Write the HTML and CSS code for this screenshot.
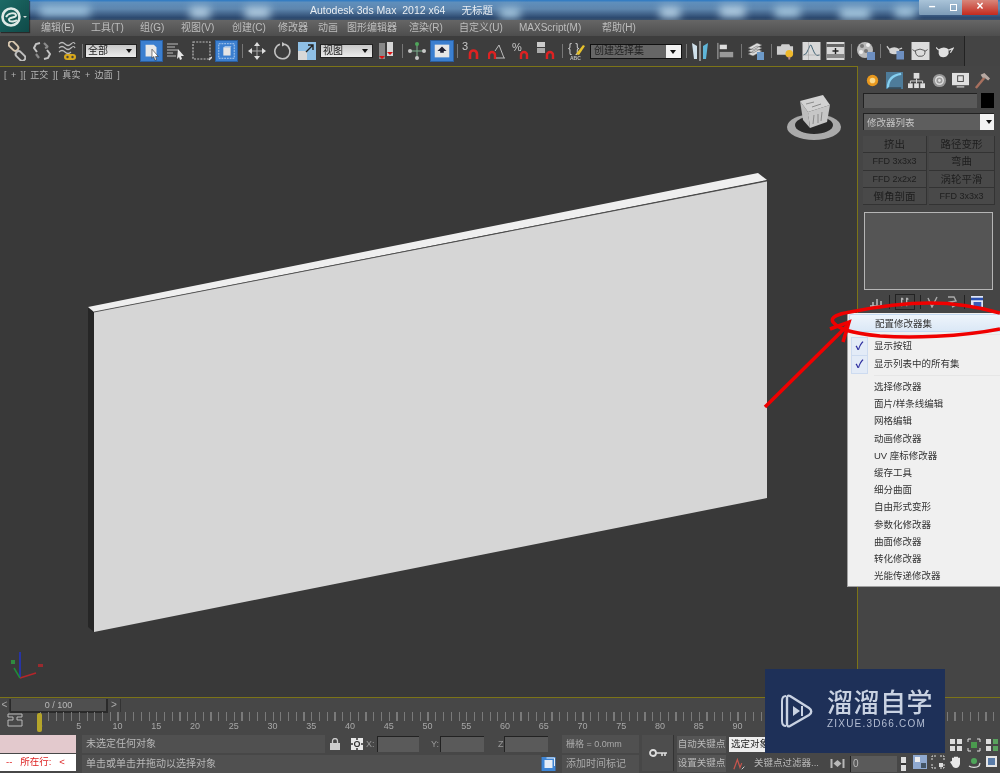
FILE: index.html
```html
<!DOCTYPE html>
<html lang="zh">
<head>
<meta charset="utf-8">
<title>Autodesk 3ds Max 2012 x64</title>
<link rel="stylesheet" href="styles.css">
</head>
<body>
<div class="app">
  <header class="titlebar">
    <div class="patches"></div>
    <div class="title"><span>Autodesk 3ds Max&nbsp; 2012 x64</span><span>无标题</span></div>
    <div class="winbtns">
      <span class="wb">&#8211;</span><span class="wb max"><b></b></span><span class="wb close">&#215;</span>
    </div>
  </header>
  <a class="applogo">
    <svg width="29" height="32" viewBox="0 0 29 32"><circle cx="11" cy="17" r="8.5" fill="none" stroke="#dfe9e6" stroke-width="2.6"/><path d="M6 17c2-4 9-5 10-2s-8 2-7 5 7 1 8 0" fill="none" stroke="#dfe9e6" stroke-width="2"/><path d="M23 16l4 0-2 2z" fill="#cfd8d6"/></svg>
  </a>
  <nav class="menubar">
    <span>编辑(E)</span><span>工具(T)</span><span>组(G)</span><span>视图(V)</span><span>创建(C)</span><span>修改器</span><span>动画</span><span>图形编辑器</span><span>渲染(R)</span><span>自定义(U)</span><span>MAXScript(M)</span><span>帮助(H)</span>
  </nav>
  <div class="toolrow">
    <div class="toolbar">
      <svg class="ic" viewBox="0 0 18 20"><rect x="0" y="2" width="11" height="6" rx="3" transform="rotate(45 5.500 5)" fill="none" stroke="#d6c6ae" stroke-width="2"/><rect x="7" y="12" width="11" height="6" rx="3" transform="rotate(45 12.500 15)" fill="none" stroke="#bfbfbf" stroke-width="2"/></svg>
      <svg class="ic" viewBox="0 0 18 20"><path d="M7 2L3 3 1 7l3 4M11 18l4-1 2-4-3-4" fill="none" stroke="#c4c4c4" stroke-width="2"/><path d="M11 2l4 4M12 7l3-1M3 13l3 4" stroke="#8a8a8a" stroke-width="2.200"/></svg>
      <svg class="ic" viewBox="0 0 18 20"><path d="M1 3q3-3 6 0t6 0 4 0M1 7q3-3 6 0t6 0 4 0M1 11q3-3 6 0t6 0" fill="none" stroke="#bbb" stroke-width="1.200"/><rect x="6" y="13" width="12" height="6" rx="3" fill="#d8a81c"/><circle cx="9.500" cy="16" r="1.200" fill="#444"/><circle cx="14.500" cy="16" r="1.200" fill="#444"/></svg>
      <i class="sep"></i>
      <div class="combo light"><span>全部</span><b></b></div>
      <div class="tbtn on"><svg viewBox="0 0 23 22"><path d="M5 4h9l3 3v10H5z" fill="#e8e8e8"/><path d="M12 9l7 8-3 0 1 4-2 0-1-4-2 2z" fill="#fff" stroke="#333" stroke-width=".7"/></svg></div>
      <svg class="ic" viewBox="0 0 18 18"><path d="M0 2h11M0 5h8M0 8h11M0 11h6M0 14h9" stroke="#bbb" stroke-width="1.200"/><path d="M11 7l6 7-3 0 1 3-2 1-1-3-2 2z" fill="#e6e6e6"/></svg>
      <svg class="ic rect" viewBox="0 0 20 20"><rect x="1" y="1" width="17" height="17" fill="none" stroke="#bdbdbd" stroke-dasharray="2 1.200" stroke-width="1.200"/><path d="M17 19l3-3" stroke="#ddd" stroke-width="1.400"/></svg>
      <div class="tbtn on"><svg viewBox="0 0 23 22"><rect x="3" y="3" width="17" height="16" fill="none" stroke="#bcd5f2" stroke-dasharray="2 1"/><path d="M8 7h8v9H8z" fill="#e4e4e4"/><path d="M8 7l2-1h7l-1 1z" fill="#fff"/></svg></div>
      <i class="sep"></i>
      <svg class="ic" viewBox="0 0 18 18"><path d="M9 3v12M3 9h12" stroke="#aaa" stroke-width="1"/><path d="M9 0l3 4H6zM9 18l3-4H6zM0 9l4-3v6zM18 9l-4-3v6z" fill="#dedede"/></svg>
      <svg class="ic" viewBox="0 0 18 18"><path d="M7 2.200A7.500 7.500 0 1 0 12 2.300" fill="none" stroke="#c2c2c2" stroke-width="1.600"/><path d="M9 0l4 2.500-4 2z" fill="#c2c2c2"/></svg>
      <svg class="ic" viewBox="0 0 18 18"><rect width="18" height="18" fill="#8fc0e6"/><rect y="9" width="9" height="9" fill="#d8d8d8"/><path d="M8 10l7-7M10 3h5v5" stroke="#222" stroke-width="1.400" fill="none"/></svg>
      <div class="combo light wide"><span>视图</span><b></b></div>
      <svg class="ic" viewBox="0 0 18 20"><path d="M1 2h6v16H1z" fill="#888"/><path d="M9 1h6v14H9z" fill="#d6d6d6"/><path d="M4 18l-3-3h6zM12 14l-3-3h6z" fill="#d11"/></svg>
      <i class="sep"></i>
      <svg class="ic" viewBox="0 0 18 18"><path d="M9 1v16M1 9h16" stroke="#7fb08f" stroke-width="1"/><circle cx="9" cy="2" r="2" fill="#4fa65a"/><circle cx="2" cy="9" r="2" fill="#c8c8c8"/><circle cx="16" cy="9" r="2" fill="#c8c8c8"/><circle cx="9" cy="16" r="2" fill="#c8c8c8"/></svg>
      <div class="tbtn on wide2"><svg viewBox="0 0 24 22"><rect x="4" y="4" width="16" height="14" fill="#e6e6e6"/><path d="M12 6l5 5h-3v2h-4v-2H7z" fill="#223"/></svg></div>
      <i class="sep"></i>
      <svg class="ic" viewBox="0 0 18 20"><text x="0" y="9" class="svgnum">3</text><path d="M8 18v-5a3 3 0 0 1 7 0v5" fill="none" stroke="#d22" stroke-width="2.600"/></svg>
      <svg class="ic" viewBox="0 0 18 20"><path d="M1 18v-4a3 3 0 0 1 6 0v4" fill="none" stroke="#d22" stroke-width="2.400"/><path d="M8 17h9M11 4l5 13M11 4l-4 6" fill="none" stroke="#bbb"/></svg>
      <svg class="ic" viewBox="0 0 18 20"><text x="0" y="10" class="svgnum">%</text><path d="M9 18v-4a3 3 0 0 1 6 0v4" fill="none" stroke="#d22" stroke-width="2.400"/></svg>
      <svg class="ic" viewBox="0 0 18 20"><rect x="0" y="1" width="8" height="5" fill="#ccc"/><rect x="0" y="7" width="8" height="5" fill="#aaa"/><path d="M10 18v-4a3 3 0 0 1 6 0v4" fill="none" stroke="#d22" stroke-width="2.400"/></svg>
      <i class="sep"></i>
      <svg class="ic" viewBox="0 0 18 20"><text x="0" y="11" class="svgbrace">{ }</text><path d="M8 13l7-9 2 1-6 9z" fill="#e6c12c"/><text x="2" y="19" class="svgabc">ABC</text></svg>
      <div class="combo sets"><span>创建选择集</span><b></b></div>
      <i class="sep"></i>
      <svg class="ic" viewBox="0 0 18 20"><path d="M1 2l5 3v13H3z" fill="#cfe0ea"/><path d="M9 0v20" stroke="#ddd"/><path d="M17 2l-5 3v13h3z" fill="#5fb5d8"/></svg>
      <svg class="ic" viewBox="0 0 20 20"><path d="M1 1v18" stroke="#bbb"/><rect x="3" y="3" width="8" height="5" fill="#ddd"/><rect x="3" y="11" width="15" height="6" fill="#999"/></svg>
      <i class="sep"></i>
      <svg class="ic" viewBox="0 0 18 20"><path d="M1 7l9-5 5 2-9 5zM1 10l9-5 5 2-9 5zM1 13l9-5 5 2-9 5z" fill="#ddd" stroke="#555" stroke-width=".5"/><rect x="10" y="11" width="7" height="8" fill="#6d9ac8"/></svg>
      <i class="sep"></i>
      <svg class="ic" viewBox="0 0 19 20"><path d="M1 5h4l1-2h8l1 2h3v9H1z" fill="#cfcfcf"/><circle cx="14" cy="13" r="4" fill="#f0b92a"/><rect x="13" y="16" width="2" height="3" fill="#b88"/></svg>
      <svg class="ic big" viewBox="0 0 18 18"><rect width="18" height="18" fill="#d8d8d8"/><path d="M1 13q3 0 5-6t3-3 3 7 5 2" fill="none" stroke="#467" stroke-width="1"/><path d="M0 13h18M6 0v18" stroke="#999" stroke-width=".5"/></svg>
      <svg class="ic big" viewBox="0 0 18 18"><rect width="18" height="18" fill="#d8d8d8"/><rect y="2" width="18" height="3" fill="#666"/><rect y="12" width="18" height="4" fill="#888"/><path d="M9 6v6M6 9h6" stroke="#222" stroke-width="1.400"/></svg>
      <i class="sep"></i>
      <svg class="ic" viewBox="0 0 18 20"><circle cx="8" cy="9" r="8" fill="#bbb"/><circle cx="5" cy="5" r="2" fill="#777"/><circle cx="11" cy="4" r="2" fill="#eee"/><circle cx="4" cy="11" r="2" fill="#eee"/><circle cx="9" cy="10" r="2" fill="#777"/><rect x="10" y="11" width="8" height="8" fill="#6d8fc0"/></svg>
      <i class="sep"></i>
      <svg class="ic" viewBox="0 0 19 20"><path d="M3 8q6-4 11 0v4q-5 3-10 0z" fill="#d5d5d5"/><path d="M1 5l3 4M14 8l3-1" stroke="#ccc" stroke-width="1.400"/><rect x="11" y="10" width="8" height="9" fill="#6d8fc0"/></svg>
      <svg class="ic big" viewBox="0 0 19 19"><rect width="19" height="19" fill="#dcdcdc"/><path d="M4 9q5-3 10 0 1 5-3 6H7q-3-1-3-6zM14 10l3-2M4 10L1 8" fill="none" stroke="#555"/></svg>
      <svg class="ic" viewBox="0 0 20 18"><path d="M3 7q6-4 11 0v5q-2 4-6 4t-5-4z" fill="#e0e0e0"/><path d="M14 8l5-2-3 5M3 8L0 5" stroke="#ddd" stroke-width="1.400" fill="none"/></svg>
    </div>
  </div>
  <main class="workspace">
    <section class="viewport">
      <div class="vplabel">[ + ][ 正交 ][ 真实 + 边面 ]</div>
    </section>
    <aside class="panel">
      <div class="tabs">
        <svg class="tab" viewBox="0 0 18 18"><circle cx="9" cy="9" r="6" fill="#e8981e"/><circle cx="9" cy="9" r="3" fill="#fbd98a"/></svg>
        <svg class="tab" viewBox="0 0 18 18"><rect width="18" height="18" fill="#4e7c9a"/><path d="M2 17Q2 4 16 2" fill="none" stroke="#86d0f0" stroke-width="2.400"/><path d="M2 17h14" stroke="#222"/></svg>
        <svg class="tab" viewBox="0 0 18 18"><rect x="6" y="1" width="6" height="6" fill="#ddd"/><rect y="12" width="5" height="5" fill="#ddd"/><rect x="6.500" y="12" width="5" height="5" fill="#ddd"/><rect x="13" y="12" width="5" height="5" fill="#ddd"/><path d="M9 7v5M2.500 12V9.500h13V12" stroke="#ddd" fill="none"/></svg>
        <svg class="tab" viewBox="0 0 18 18"><circle cx="10" cy="9" r="7" fill="#999"/><circle cx="10" cy="9" r="4" fill="none" stroke="#ddd" stroke-width="1.500"/><circle cx="10" cy="9" r="1.500" fill="#ddd"/></svg>
        <svg class="tab" viewBox="0 0 18 18"><rect y="1" width="18" height="13" fill="#e0e0e0"/><rect x="6" y="4" width="6" height="6" fill="none" stroke="#444"/><rect x="5" y="15" width="8" height="1.500" fill="#bbb"/></svg>
        <svg class="tab" viewBox="0 0 18 18"><path d="M2 17L11 6" stroke="#a8705e" stroke-width="2.600"/><path d="M7 3l4-2 6 6-2 2-4-3-2 0z" fill="#b7a9a2"/></svg>
      </div>
      <div class="namerow"><div class="namefield"></div><div class="swatch"></div></div>
      <div class="modlist"><span>修改器列表</span><b></b></div>
      <div class="modbtns">
        <span class="mb">挤出</span><span class="mb">路径变形</span>
        <span class="mb sm">FFD 3x3x3</span><span class="mb">弯曲</span>
        <span class="mb sm">FFD 2x2x2</span><span class="mb">涡轮平滑</span>
        <span class="mb">倒角剖面</span><span class="mb sm">FFD 3x3x3</span>
      </div>
      <div class="stack"></div>
      <div class="stackbar">
        <svg class="sb" viewBox="0 0 14 12"><path d="M0 10h14M3 6v4M7 3v7M11 5v5" stroke="#bbb" stroke-width="1.500"/></svg>
        <i class="vs"></i>
        <span class="sbbox"><svg viewBox="0 0 14 12"><path d="M3 1v10M9 1v10M3 1l2 2M9 1l2 2" stroke="#bbb" stroke-width="1.500"/></svg></span>
        <i class="vs"></i>
        <svg class="sb" viewBox="0 0 14 12"><path d="M2 2l4 9 5-10" stroke="#aaa" stroke-width="1.400" fill="none"/></svg>
        <svg class="sb" viewBox="0 0 14 12"><path d="M3 1h6l2 4-6 1 6 3-4 2" stroke="#aaa" stroke-width="1.400" fill="none"/></svg>
        <i class="vs"></i>
        <svg class="sb" viewBox="0 0 14 14"><rect width="14" height="14" fill="#dfe6f5"/><rect y="2" width="14" height="3" fill="#2a4fb0"/><rect x="3" y="7" width="9" height="6" fill="#3a5ab8"/></svg>
      </div>
    </aside>
  </main>
  <div class="timeline">
    <div class="slider">
      <span class="arrowbtn">&lt;</span><span class="frame">0 / 100</span><span class="arrowbtn">&gt;</span>
    </div>
    <div class="ruler">
      <svg class="curveic" viewBox="0 0 16 14"><path d="M1 1h14v3H10v3h5v6H1V7h5V4H1z" fill="none" stroke="#bbb"/></svg>
      <div class="scale">
        <div class="ticks"></div>
        <div class="nums"><span>0</span><span>5</span><span>10</span><span>15</span><span>20</span><span>25</span><span>30</span><span>35</span><span>40</span><span>45</span><span>50</span><span>55</span><span>60</span><span>65</span><span>70</span><span>75</span><span>80</span><span>85</span><span>90</span></div>
        <b class="handle"></b>
      </div>
    </div>
  </div>
  <footer class="status">
    <div class="listener"><div class="pink"></div><div class="line">-- &nbsp;&nbsp;所在行: &nbsp;&nbsp;&lt;</div></div>
    <div class="msgs">
      <div class="msg1">
        <span class="msgtxt w1">未选定任何对象</span>
        <svg class="lock" viewBox="0 0 10 12"><rect y="5" width="10" height="7" fill="#ccc"/><path d="M2.500 5V3a2.500 2.500 0 0 1 5 0v2" fill="none" stroke="#ccc" stroke-width="1.300"/></svg>
        <svg class="abs" viewBox="0 0 12 12"><rect width="12" height="12" fill="#e8e8e8"/><circle cx="6" cy="6" r="2.500" fill="none" stroke="#333" stroke-width="1.200"/><path d="M6 0v2M6 10v2M0 6h2M10 6h2" stroke="#333" stroke-width="1.500"/></svg>
        <span class="axis">X:</span><span class="coord cx"></span>
        <span class="axis ay">Y:</span><span class="coord cy"></span>
        <span class="axis az">Z:</span><span class="coord cz"></span>
      </div>
      <div class="msg2">
        <span class="msgtxt w2">单击或单击并拖动以选择对象</span>
        <svg class="tagic" viewBox="0 0 14 14"><rect width="14" height="14" fill="#3f86d6"/><rect x="3" y="3" width="8" height="8" fill="#e6eef8"/><path d="M5 1h8v8" fill="none" stroke="#e6eef8"/></svg>
      </div>
    </div>
    <div class="gridcol">
      <div class="gridbox">栅格 = 0.0mm</div>
      <div class="gridbox tag">添加时间标记</div>
    </div>
    <div class="keybox"><svg viewBox="0 0 18 8"><circle cx="4" cy="4" r="3" fill="none" stroke="#ddd" stroke-width="1.800"/><path d="M7 4h11M13 4v3M16 4v3" stroke="#ddd" stroke-width="1.600"/></svg></div>
    <div class="keycol">
      <div class="keyrow"><span class="keybtn">自动关键点</span><span class="keysel">选定对象</span></div>
      <div class="keyrow"><span class="keybtn">设置关键点</span>
        <svg class="wave" viewBox="0 0 16 14"><path d="M1 13L5 2l3 9 2-5" fill="none" stroke="#c8564e" stroke-width="1.400"/><path d="M10 13l3-3" stroke="#ddd"/></svg>
        <span class="filter">关键点过滤器...</span>
        <svg class="prev" viewBox="0 0 14 9"><path d="M0 0h2v9H0zM14 0h-2v9h2zM3 4.500L7 1v7zM11 4.500L7 1v7z" fill="#b8b8b8"/></svg>
        <span class="framefield">0</span><span class="spin"></span>
      </div>
    </div>
    <div class="navs">
      <svg class="nav first" viewBox="0 0 14 14"><path d="M1 1h5v5H1zM8 1h5v5H8zM1 8h5v5H1zM8 8h5v5H8z" fill="#ddd"/></svg>
      <svg class="nav" viewBox="0 0 14 14"><rect x="4" y="4" width="6" height="6" fill="#4a9a4e"/><path d="M1 4V1h3M10 1h3v3M13 10v3h-3M4 13H1v-3" fill="none" stroke="#ddd"/></svg>
      <svg class="nav" viewBox="0 0 14 14"><path d="M1 1h5v5H1zM1 8h5v5H1z" fill="#ddd"/><path d="M8 1h5v5H8zM8 8h5v5H8z" fill="#5aa25e"/></svg>
      <svg class="nav" viewBox="0 0 14 14"><rect x="0" y="0" width="14" height="14" fill="#8fa9d0"/><rect x="2" y="2" width="5" height="5" fill="#eee"/><rect x="8" y="8" width="5" height="5" fill="#456"/></svg>
      <svg class="nav" viewBox="0 0 14 14"><path d="M1 5V1h4M9 1h4v4M13 9v4H9M5 13H1V9" fill="none" stroke="#ddd" stroke-dasharray="2 1"/><rect x="8" y="8" width="4" height="4" fill="#ddd"/></svg>
      <svg class="nav" viewBox="0 0 14 14"><path d="M3 6V3q1-1 2 0V2q1-1 2 0v0q1-1 2 0v1q1-1 2 0v6q-1 4-4 4T3 10L1 7q1-1 2-1z" fill="#e8e8e8"/></svg>
      <svg class="nav" viewBox="0 0 14 14"><circle cx="7" cy="6" r="3" fill="#4fa65a"/><path d="M2 11a6 3 0 0 0 10 0M12 11l1-3" fill="none" stroke="#ddd" stroke-width="1.300"/></svg>
      <svg class="nav" viewBox="0 0 14 14"><rect x="1" y="1" width="11" height="11" fill="#e6e6e6"/><rect x="3" y="3" width="7" height="7" fill="#5a7ca8"/></svg>
    </div>
  </footer>

  <svg class="scene" width="1000" height="773" viewBox="0 0 1000 773">
    <polygon points="88,307 94,312 94,632 88,627" fill="#262626"/>
    <polygon points="88,307 758,173 767,180 94,312" fill="#efefef"/>
    <polygon points="94,312 767,181 767,498 94,632" fill="#d6d6d6"/>
    <path d="M94,312 L767,181" stroke="#444" stroke-width=".8"/>
    <g>
      <ellipse cx="814" cy="127" rx="27" ry="13" fill="#aaa"/>
      <ellipse cx="814" cy="125" rx="19" ry="9" fill="#2a2a2a"/>
      <polygon points="800,101 808,112 810,128 803,120" fill="#bdbdbd"/>
      <polygon points="808,112 830,105 827,122 810,128" fill="#c6c6c6"/>
      <polygon points="800,101 823,95 830,105 808,112" fill="#d2d2d2"/>
      <path d="M814 115l-1 9M818 114l0 9M822 112l-1 9M806 104l8-2M812 107l9-3" stroke="#8a8a8a"/>
    </g>
    <g fill="none">
      <path d="M20 678V652" stroke="#2233c8" stroke-width="1.500"/>
      <path d="M20 678l16-5" stroke="#b5252a" stroke-width="1.500"/>
      <path d="M20 678l-6-10" stroke="#1f8a3a" stroke-width="1.500"/>
      <rect x="11" y="660" width="4" height="4" fill="#2f8a3f"/>
      <rect x="38" y="664" width="5" height="3" fill="#9a2a2e"/>
    </g>
  </svg>

  <div class="ctxmenu">
    <div class="item hot">配置修改器集</div>
    <i class="rule"></i>
    <div class="item chk">显示按钮</div>
    <div class="item chk">显示列表中的所有集</div>
    <i class="rule"></i>
    <div class="item">选择修改器</div>
    <div class="item">面片/样条线编辑</div>
    <div class="item">网格编辑</div>
    <div class="item">动画修改器</div>
    <div class="item">UV 座标修改器</div>
    <div class="item">缓存工具</div>
    <div class="item">细分曲面</div>
    <div class="item">自由形式变形</div>
    <div class="item">参数化修改器</div>
    <div class="item">曲面修改器</div>
    <div class="item">转化修改器</div>
    <div class="item">光能传递修改器</div>
  </div>

  <svg class="annot" width="1000" height="773" viewBox="0 0 1000 773">
    <path d="M765 407L847 326" stroke="#f00000" stroke-width="3.500" fill="none"/>
    <path d="M830 329L849 322 843 342" stroke="#f00000" stroke-width="3.500" fill="none"/>
    <path d="M1000 313C975 306 950 303 930 303 900 303 870 308 850 312 838 314 830 317 833 322 838 329 850 333 880 336 910 338 960 337 1000 329" stroke="#f00000" stroke-width="3.500" fill="none"/>
  </svg>

  <div class="watermark">
    <svg class="wmlogo" viewBox="0 0 34 36"><path d="M6 3c-3 0-4 2-4 5v20c0 3 1 5 4 5" fill="none" stroke="#c9d2e2" stroke-width="2"/><path d="M10 3l19 12c3 2 3 5 0 7L10 33c-2 1-3 0-3-2V5c0-2 1-3 3-2z" fill="none" stroke="#c9d2e2" stroke-width="2.400"/><path d="M13 13l7 5-7 5z" fill="#c9d2e2"/><path d="M22 13v10" stroke="#c9d2e2" stroke-width="2"/></svg>
    <div class="wmtext"><div class="wmcn">溜溜自学</div><div class="wmen">ZIXUE.3D66.COM</div></div>
  </div>
</div>
</body>
</html>
```
FILE: styles.css
```css
* { box-sizing: border-box; }
html, body { margin: 0; padding: 0; }
body { width: 1000px; height: 773px; overflow: hidden; background: #3a3a3a; }
.app {
  position: relative; width: 1000px; height: 773px; overflow: hidden;
  display: flex; flex-direction: column;
  font-family: "Liberation Sans", "Noto Sans CJK SC", sans-serif;
  font-size: 10px; color: #b9b9b9; background: #444;
  filter: blur(.5px);
}

/* title bar */
.titlebar {
  height: 20px; flex: none; position: relative; display: flex; justify-content: flex-end;
  background: linear-gradient(#2a78c4 0, #5f8fbc 12%, #5e86ae 45%, #2d4a70 88%, #39506a 100%);
  overflow: hidden;
}
.patches {
  position: absolute; inset: 0; filter: blur(4px);
  background-repeat: no-repeat;
  background-image:
    linear-gradient(#9fc4df, #9fc4df), linear-gradient(#b5d0e4, #b5d0e4), linear-gradient(#b5d0e4, #b5d0e4),
    linear-gradient(#a9cbe2, #a9cbe2), linear-gradient(#b5d0e4, #b5d0e4), linear-gradient(#b5d0e4, #b5d0e4),
    linear-gradient(#a9cbe2, #a9cbe2), linear-gradient(#a9cbe2, #a9cbe2), linear-gradient(#a9cbe2, #a9cbe2);
  background-size: 50px 10px, 20px 11px, 25px 11px, 20px 10px, 20px 11px, 25px 11px, 25px 10px, 30px 11px, 20px 10px;
  background-position: 40px 6px, 190px 7px, 245px 7px, 500px 8px, 660px 7px, 720px 6px, 775px 7px, 840px 8px, 895px 7px;
}
.title {
  position: absolute; left: 310px; top: 3px; display: flex; gap: 16px;
  font-size: 10.500px; line-height: 14px; color: #e9eef3; white-space: pre;
}
.winbtns { position: relative; display: flex; height: 16px; margin: 0 2px 0 0; border-radius: 0 0 3px 3px; overflow: hidden; }
.wb { width: 26px; height: 15px; line-height: 13px; text-align: center; color: #fff; font-weight: bold; font-size: 12px; background: linear-gradient(#a9c3d8, #7d9cb8); }
.max { width: 17px; display: flex; align-items: center; justify-content: center; }
.max b { width: 7px; height: 7px; border: 1.500px solid #fff; }
.close { width: 36px; background: linear-gradient(#d8867a, #c42a1e); }
.applogo {
  position: absolute; left: 0; top: 0; width: 29px; height: 32px;
  background: linear-gradient(135deg, #1d6a66, #0f4a48);
  box-shadow: 1px 1px 1px rgba(0,0,0,.5);
}
.applogo svg { display: block; }

/* menu */
.menubar {
  height: 16px; flex: none; padding-left: 41px;
  display: grid; grid-template-columns: 50px 49px 41px 51px 46px 40px 29px 62px 50px 60px 83px auto;
  align-items: center; justify-content: start;
  background: linear-gradient(#666, #4e4e4e);
  font-size: 10px; line-height: 16px; color: #bdbdbd; white-space: nowrap;
}

/* toolbar */
.toolrow { height: 30px; flex: none; background: #444; }
.toolbar {
  width: 965px; height: 30px; padding-left: 8px; background: #3d3d3d;
  border-right: 1px solid #222;
  display: grid; align-items: center; justify-content: start;
  grid-template-columns: 25px 25px 24px 3px 55px 27px 25px 23px 27px 6px 25px 25px 22px 58px 24px 6px 22px 27px 5px 26px 24px 25px 25px 6px 22px 96px 5px 26px 24px 6px 24px 5px 26px 24px 25px 6px 23px 6px 25px 25px 25px;
}
.ic { width: 18px; height: 20px; display: block; }
.rect { width: 20px; height: 20px; }
.big { width: 19px; height: 18px; }
.sep { display: block; width: 1px; height: 14px; background: #777; }
.tbtn { width: 23px; height: 22px; background: #3b7fd0; border: 1px solid #2a5e9e; }
.wide2 { width: 24px; }
.tbtn svg { display: block; width: 100%; height: 100%; }
.combo {
  width: 52px; height: 14px; display: flex; align-items: center; justify-content: space-between;
  padding: 0 4px 0 2px; font-size: 10px; color: #222; line-height: 14px;
}
.combo.light { background: linear-gradient(#c8c8c8, #ececec); border: 1px solid #222; }
.combo.wide { width: 53px; }
.combo b, .modlist b { width: 0; height: 0; border: 3px solid transparent; border-top: 4px solid #111; border-bottom: 0; }
.combo.sets { width: 92px; height: 15px; padding: 0 0 0 3px; background: #666; border: 1px solid #111; color: #222; }
.combo.sets b { width: 15px; height: 13px; background: #f2f2f2; border: 0; position: relative; }
.combo.sets b::after { content: ""; position: absolute; left: 4px; top: 5px; border: 3px solid transparent; border-top: 4px solid #111; border-bottom: 0; }
.svgnum { font: 11px "Liberation Sans", sans-serif; fill: #c8c8c8; }
.svgbrace { font: 12px "Liberation Sans", sans-serif; fill: #c8c8c8; }
.svgabc { font: bold 5px "Liberation Sans", sans-serif; fill: #bbb; }

/* workspace */
.workspace { height: 631px; flex: none; display: flex; }
.viewport { width: 858px; flex: none; background: #393939; border-right: 1px solid #7c7418; box-shadow: inset 0 1px 0 #7c7418; padding: 4px 0 0 4px; }
.vplabel { font-size: 9px; line-height: 11px; color: #b5b5b5; letter-spacing: .2px; word-spacing: 1.500px; }
.panel { flex: 1; padding: 5px 5px 0 5px; background: #454545; display: flex; flex-direction: column; }
.tabs { display: flex; height: 19px; gap: 5px; padding-left: 1px; align-items: center; }
.tab { width: 17px; height: 17px; flex: none; }
.namerow { display: flex; gap: 4px; margin-top: 3px; height: 15px; }
.namefield { width: 114px; background: #5a5a5a; border-top: 1px solid #222; border-left: 1px solid #222; }
.swatch { width: 13px; background: #000; }
.modlist { width: 131px; height: 17px; margin-top: 5px; background: #5e5e5e; border-top: 1px solid #222; border-left: 1px solid #222; display: flex; align-items: center; padding-left: 3px; color: #c6c6c6; font-size: 9.500px; position: relative; }
.modlist span { flex: 1; }
.modlist b { box-sizing: content-box; margin-right: 2px; position: relative; z-index: 1; }
.modlist::after { content: ""; position: absolute; right: 0; top: 0; width: 14px; height: 16px; background: #f2f2f2; z-index: 0; }
.modbtns { display: grid; grid-template-columns: 64px 66px; column-gap: 2px; margin-top: 6px; width: 132px; }
.mb { height: 17.300px; line-height: 16px; text-align: center; background: #494949; border-right: 1px solid #333; border-bottom: 1px solid #333; color: #1e1e1e; font-size: 10.500px; white-space: nowrap; }
.mb.sm { font-size: 9px; }
.stack { width: 129px; height: 78px; margin: 7px 0 0 1px; border: 1px solid #b5b5b5; background: #555; }
.stackbar { display: flex; align-items: center; gap: 5px; margin: 4px 0 0 7px; height: 16px; }
.sb { width: 14px; height: 12px; flex: none; }
.sbbox { width: 20px; height: 16px; border: 1px solid #222; padding: 2px 3px; flex: none; }
.sbbox svg { display: block; width: 100%; height: 100%; }
.vs { width: 1px; height: 14px; background: #222; flex: none; }

/* timeline */
.timeline { height: 36px; flex: none; background: #474747; box-shadow: inset 0 1px 0 #7c7418; }
.slider { height: 15px; padding-top: 2px; display: flex; }
.arrowbtn { width: 10px; height: 13px; line-height: 12px; text-align: center; color: #aaa; border-right: 1px solid #333; }
.arrowbtn:last-child { width: 13px; text-align: center; border-right: 1px solid #333; }
.frame { width: 98px; height: 14px; line-height: 12px; text-align: center; background: #4f4f4f; border: 1px solid #2a2a2a; border-width: 0 2px 2px 1px; color: #b8b8b8; font-size: 9px; }
.ruler { height: 21px; display: flex; }
.curveic { width: 16px; height: 14px; margin: 1px 0 0 7px; flex: none; }
.scale { position: relative; margin-left: 17px; flex: 1; }
.ticks { height: 9px; background: repeating-linear-gradient(90deg, #7a7a7a 0, #7a7a7a 1px, transparent 1px, transparent 7.750px); }
.nums { display: grid; grid-template-columns: repeat(21, 38.750px); margin-left: -6px; font-size: 9px; line-height: 11px; color: #a8a8a8; }
.nums span { text-align: center; width: 12px; }
.handle { position: absolute; left: -3px; top: 1px; width: 5px; height: 19px; background: #b5a52a; border-radius: 2px; }

/* status */
.status { height: 40px; flex: 1; display: flex; background: #474747; padding-top: 2px; }
.listener { width: 76px; flex: none; }
.pink { height: 18px; background: #e3c9cd; }
.line { height: 17px; margin-top: 1px; background: #fff; color: #d22; font-size: 9.500px; line-height: 16px; padding-left: 6px; white-space: pre; }
.msgs { width: 474px; margin-left: 6px; flex: none; }
.msg1, .msg2 { display: flex; align-items: center; height: 18px; }
.msg2 { margin-top: 2px; }
.msgtxt { height: 100%; background: #505050; padding-left: 4px; line-height: 18px; font-size: 10px; color: #b8b8b8; }
.w1 { width: 243px; }
.w2 { width: 460px; }
.lock { width: 10px; height: 12px; margin-left: 5px; flex: none; }
.abs { width: 12px; height: 12px; margin-left: 11px; flex: none; }
.axis { margin-left: 3px; width: 11px; color: #999; font-size: 9px; flex: none; }
.ay { margin-left: 12px; width: 9px; }
.az { margin-left: 14px; width: 6px; }
.coord { width: 42px; height: 16px; background: #5a5a5a; border-top: 1px solid #222; border-left: 1px solid #222; flex: none; }
.cy { width: 44px; }
.cz { width: 44px; }
.tagic { width: 15px; height: 14px; flex: none; }
.gridcol { width: 77px; flex: none; margin-left: 6px; display: flex; flex-direction: column; gap: 2px; }
.gridbox { height: 18px; background: #505050; padding-left: 4px; font-size: 9px; line-height: 18px; color: #a9a9a9; white-space: nowrap; }
.tag { font-size: 10px; }
.keybox { width: 32px; height: 36px; margin-left: 3px; flex: none; background: #4d4d4d; border-right: 1px solid #333; display: flex; align-items: center; justify-content: center; }
.keybox svg { width: 18px; height: 8px; }
.keycol { width: 229px; margin: 1px 0 0 3px; flex: none; display: flex; flex-direction: column; gap: 2px; }
.keyrow { display: flex; align-items: center; height: 17px; white-space: nowrap; }
.keybtn { width: 49px; height: 17px; flex: none; background: #555; text-align: center; color: #b8b8b8; font-size: 9.500px; line-height: 16px; }
.keysel { margin-left: 3px; height: 15px; width: 60px; padding-left: 2px; background: #eee; color: #222; font-size: 9.500px; line-height: 14px; }
.wave { width: 14px; height: 14px; margin-left: 7px; flex: none; }
.filter { margin-left: 7px; width: 68px; height: 17px; font-size: 9.500px; line-height: 16px; color: #b8b8b8; flex: none; overflow: hidden; }
.prev { width: 15px; height: 9px; margin-left: 8px; flex: none; }
.framefield { width: 47px; height: 16px; margin-left: 5px; flex: none; padding-left: 2px; line-height: 15px; background: #5a5a5a; color: #bbb; border-left: 1px solid #222; }
.spin { width: 5px; height: 14px; margin-left: 4px; flex: none; background: linear-gradient(#ddd 45%, #333 45%, #333 55%, #ddd 55%); }
.navs { margin-left: 7px; padding-top: 3px; height: 38px; display: grid; grid-template-columns: repeat(5, 14px); gap: 3px 4px; align-content: start; justify-content: start; flex: none; }
.nav { width: 14px; height: 14px; }
.first { grid-column-start: 3; }

/* overlays */
.scene, .annot { position: absolute; left: 0; top: 0; pointer-events: none; }
.ctxmenu {
  position: absolute; left: 847px; top: 313px; width: 153px; height: 274px;
  background: #f0f0f0; color: #333; font-size: 9.500px; padding: 1px 0 0 0;
  border-left: 1px solid #a0a0a0; border-bottom: 1px solid #a0a0a0;
  display: flex; flex-direction: column;
}
.item { height: 17.200px; line-height: 17px; padding-left: 26px; white-space: nowrap; position: relative; flex: none; }
.hot { height: 18px; line-height: 17px; background: linear-gradient(#eef4fb, #dbe8f6); border: 1px solid #c4daf2; border-right: 0; margin: 0 0 0 1px; padding-left: 25px; border-radius: 2px 0 0 2px; }
.chk { height: 18px; line-height: 18px; }
.chk::before {
  content: "\2713"; position: absolute; left: 3px; top: 0; width: 15px; height: 17px; line-height: 17px; text-align: center;
  background: #e3ebf7; border: 1px solid #cddbf0; color: #2c2c9e; font-weight: bold; font-size: 11px;
}
.rule { display: block; flex: none; height: 1px; margin: 2px 0 2px 26px; background: #e6e6e6; }
.watermark {
  position: absolute; left: 765px; top: 669px; width: 180px; height: 84px;
  background: #1e3058; display: flex; align-items: flex-start; padding: 24px 0 0 15px; color: #c9d2e2;
}
.wmlogo { width: 34px; height: 36px; flex: none; }
.wmtext { margin-left: 13px; }
.wmcn { font-size: 26px; line-height: 26px; letter-spacing: .5px; font-weight: 500; white-space: nowrap; margin-top: -3px; }
.wmen { font-size: 10px; line-height: 10px; letter-spacing: 1.200px; margin-top: 3px; color: #b3bdd2; white-space: nowrap; }
```
